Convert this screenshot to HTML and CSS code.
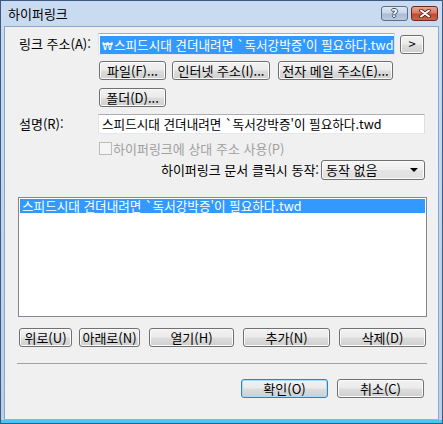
FILE: index.html
```html
<!DOCTYPE html>
<html lang="ko">
<head>
<meta charset="utf-8">
<link rel="stylesheet" href="styles.css">
</head>
<body>
<div class="window">
  <div class="titlebar">
    <span class="title">하이퍼링크</span>
    <div class="caption-btns">
      <div class="cap help"><span>?</span></div>
      <div class="cap close">
        <svg width="12" height="9" viewBox="0 0 12 9"><path d="M2 1.5 L10 7.5 M10 1.5 L2 7.5" stroke="#5a1e14" stroke-width="3.6" stroke-linecap="round"/><path d="M2 1.5 L10 7.5 M10 1.5 L2 7.5" stroke="#fff" stroke-width="2" stroke-linecap="round"/></svg>
      </div>
    </div>
  </div>
  <div class="client">
    <div class="row row-a">
      <label class="lbl">링크 주소(<u>A</u>):</label>
      <div class="textbox addr"><span class="sel long"><span class="won">₩</span>스피드시대 견뎌내려면 `독서강박증'이 필요하다.twd</span></div>
      <button class="btn go">&gt;</button>
    </div>
    <div class="row row-b indent">
      <button class="btn w66">파일(<u>F</u>)...</button>
      <button class="btn w98">인터넷 주소(<u>I</u>)...</button>
      <button class="btn w114">전자 메일 주소(<u>E</u>)...</button>
    </div>
    <div class="row row-c indent">
      <button class="btn w66">폴더(<u>D</u>)...</button>
    </div>
    <div class="row row-d">
      <label class="lbl">설명(<u>R</u>):</label>
      <div class="textbox desc"><span class="long">스피드시대 견뎌내려면 `독서강박증'이 필요하다.twd</span></div>
    </div>
    <div class="row row-e indent">
      <span class="check"></span>
      <span class="disabled">하이퍼링크에 상대 주소 사용(<u>P</u>)</span>
    </div>
    <div class="row row-f">
      <span class="flabel">하이퍼링크 문서 클릭시 동작:</span>
      <div class="select"><span>동작 없음</span><span class="arrow"></span></div>
    </div>
    <div class="listbox">
      <div class="item selected"><span class="long">스피드시대 견뎌내려면 `독서강박증'이 필요하다.twd</span></div>
    </div>
    <div class="row row-btns">
      <button class="btn w53">위로(<u>U</u>)</button>
      <button class="btn w61">아래로(<u>N</u>)</button>
      <button class="btn w85">열기(<u>H</u>)</button>
      <button class="btn w87">추가(<u>N</u>)</button>
      <button class="btn w87">삭제(<u>D</u>)</button>
    </div>
    <div class="sep"></div>
    <div class="row row-ok">
      <button class="btn w87 default">확인(<u>O</u>)</button>
      <button class="btn w87">취소(<u>C</u>)</button>
    </div>
  </div>
</div>
</body>
</html>
```

FILE: styles.css
```css
* { box-sizing: border-box; }
html, body { margin: 0; padding: 0; }
body {
  width: 443px;
  height: 424px;
  overflow: hidden;
  font-family: "Noto Sans CJK KR", "Noto Sans", sans-serif;
  font-size: 13px;
  color: #000;
}
u { text-decoration: none; }
.window {
  width: 443px;
  height: 424px;
  border: 1px solid #3b5a82;
  background: linear-gradient(#c9dbf1, #b9cfea);
  padding: 0 3px 3px 3px;
  display: flex;
  flex-direction: column;
  box-shadow: inset 0 -3px 0 #4cc4ee;
}
.titlebar {
  height: 25px;
  margin: 0 -3px;
  padding: 4px 4px 0 7px;
  display: flex;
  align-items: flex-start;
  justify-content: space-between;
}
.title {
  font-size: 13px;
  line-height: 17px;
  color: #000;
}
.caption-btns { display: flex; gap: 3px; margin-top: 1px; }
.cap {
  height: 15px;
  border: 1px solid #5a6f8a;
  border-radius: 3px;
  display: flex;
  align-items: center;
  justify-content: center;
}
.help {
  width: 27px;
  background: linear-gradient(#dfe8f3 0%, #c8d6e7 45%, #a9bdd6 55%, #b9cbe0 100%);
}
.help span {
  font-family: "DejaVu Sans", sans-serif;
  font-weight: bold;
  font-size: 11px;
  line-height: 11px;
  color: #fff;
  text-shadow: 1px 0 #3a4f6b, -1px 0 #3a4f6b, 0 1px #3a4f6b, 0 -1px #3a4f6b;
}
.close {
  width: 27px;
  border-color: #6d2a1c;
  background: linear-gradient(#e8a594 0%, #d87a63 45%, #c24a32 55%, #d0634b 100%);
}
.client {
  flex: 1;
  background: #f0f0f0;
  border: 1px solid #8ba6c8;
  border-bottom-color: #62c6ee;
  padding: 6px 13px 0 13px;
  display: flex;
  flex-direction: column;
}
.row { display: flex; align-items: center; }
.indent { padding-left: 81px; }
.lbl { width: 80px; padding-left: 1px; line-height: 16px; }
.row-a { height: 22px; }
.row-b { margin-top: 6px; height: 19px; gap: 6px; }
.row-b .w98 { margin-right: 2px; }
.row-c { margin-top: 8px; height: 19px; }
.row-d { margin-top: 7px; height: 20px; }
.row-e { margin-top: 8px; height: 13px; }
.row-f { margin-top: 5px; height: 20px; justify-content: flex-end; }
.long { font-size: 12.6px; }
.textbox {
  background: #fff;
  border: 1px solid;
  border-color: #abadb3 #dbdfe6 #e3e9ef #e2e3ea;
  white-space: nowrap;
  overflow: hidden;
}
.addr {
  width: 297px;
  height: 22px;
  padding: 2px 2px 0 1px;
  line-height: 17px;
}
.sel {
  display: inline-block;
  background: #3399ff;
  color: #fff;
  padding: 0 2px 0 2px;
  line-height: 17px;
}
.won { font-family: "DejaVu Sans", sans-serif; font-size: 11px; margin-right: 1px; }
.go { width: 24px; height: 18px; margin-left: 5px; }
.desc {
  width: 327px;
  height: 20px;
  padding: 0 3px;
  line-height: 18px;
}
.btn {
  font-family: inherit;
  font-size: 13px;
  color: #000;
  height: 19px;
  padding: 0;
  line-height: 16px;
  border: 1px solid #707070;
  border-radius: 3px;
  background: linear-gradient(#f2f2f2 0%, #ebebeb 48%, #dddddd 52%, #cfcfcf 100%);
  box-shadow: inset 0 0 0 1px #fbfbfb;
  display: inline-flex;
  align-items: center;
  justify-content: center;
  flex: none;
  white-space: nowrap;
}
.btn.default {
  border-color: #3c7fb1;
  box-shadow: inset 0 0 0 1px #a8dcf7;
}
.w53 { width: 53px; }
.w61 { width: 61px; }
.w66 { width: 67px; }
.w85 { width: 85px; }
.w87 { width: 87px; }
.w98 { width: 98px; }
.w114 { width: 115px; }
.check {
  width: 13px;
  height: 13px;
  border: 1px solid #bcbcbc;
  background: #f4f4f4;
  margin-right: 1px;
}
.disabled { color: #a0a0a0; line-height: 14px; }
.flabel { line-height: 16px; margin-right: 2px; }
.select {
  width: 104px;
  height: 20px;
  border: 1px solid #707070;
  border-radius: 3px;
  background: linear-gradient(#f6f6f6 0%, #eeeeee 48%, #e4e4e4 52%, #e0e0e0 100%);
  box-shadow: inset 0 0 0 1px #fcfcfc;
  display: flex;
  align-items: center;
  justify-content: space-between;
  padding: 0 6px 0 4px;
  line-height: 16px;
}
.arrow {
  width: 0;
  height: 0;
  border-left: 4px solid transparent;
  border-right: 4px solid transparent;
  border-top: 4px solid #000;
}
.listbox {
  margin-top: 17px;
  width: 409px;
  height: 120px;
  background: #fff;
  border: 1px solid #828790;
  padding: 1px;
}
.item {
  height: 14px;
  line-height: 14px;
  padding-left: 2px;
  white-space: nowrap;
}
.item.selected { background: #3399ff; color: #fff; }
.row-btns { margin-top: 11px; padding-left: 1px; height: 19px; }
.row-btns .btn { margin-right: 9px; }
.row-btns .w53 { margin-right: 7px; }
.row-btns .btn:last-child { margin-right: 0; }
.sep {
  margin-top: 16px;
  margin-left: -1px;
  width: 410px;
  height: 1px;
  background: #a0a0a0;
}
.row-ok {
  margin-top: 15px;
  height: 19px;
  gap: 9px;
  padding-left: 223px;
}
```
